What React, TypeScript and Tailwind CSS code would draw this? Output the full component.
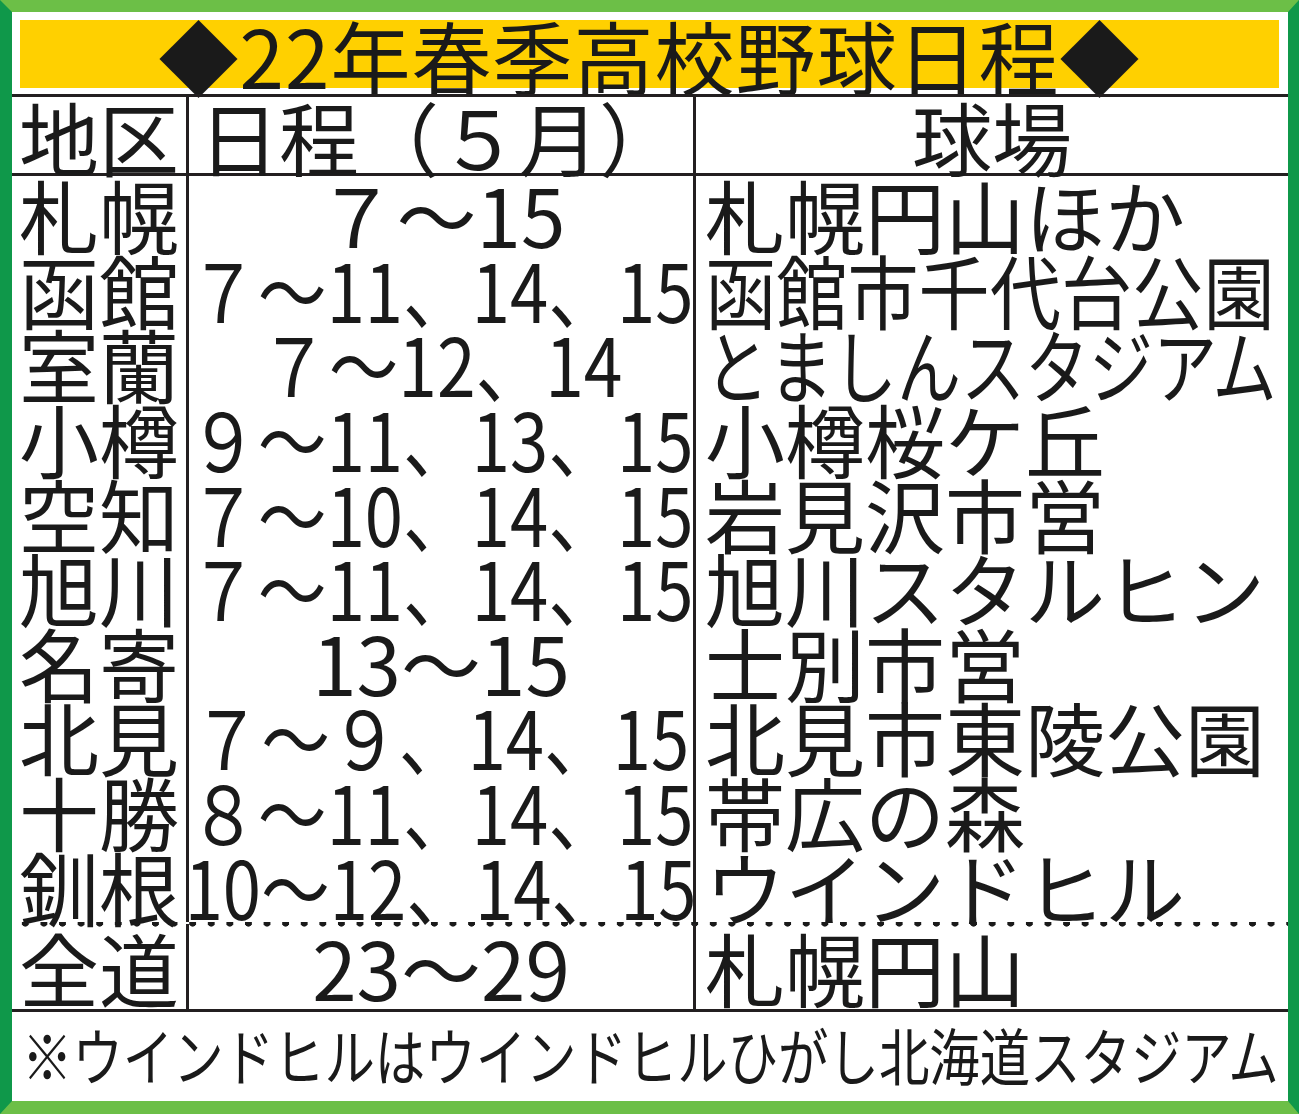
// [地区, 日程, 球場, 日程の圧縮, 球場の圧縮]
const rows: [string, string, string, string, string][] = [
  ["札幌", "７～15", "札幌円山ほか", "", ""],
  ["函館", "７～11、14、15", "函館市千代台公園", "scale-x-[0.86]", "scale-x-[0.89]"],
  ["室蘭", "７～12、14", "とましんスタジアム", "scale-x-[0.87]", "scale-x-[0.8]"],
  ["小樽", "９～11、13、15", "小樽桜ケ丘", "scale-x-[0.86]", ""],
  ["空知", "７～10、14、15", "岩見沢市営", "scale-x-[0.86]", ""],
  ["旭川", "７～11、14、15", "旭川スタルヒン", "scale-x-[0.86]", ""],
  ["名寄", "13～15", "士別市営", "", ""],
  ["北見", "７～９、14、15", "北見市東陵公園", "scale-x-[0.86]", ""],
  ["十勝", "８～11、14、15", "帯広の森", "scale-x-[0.86]", ""],
  ["釧根", "10～12、14、15", "ウインドヒル", "scale-x-[0.86]", ""],
];

function Row({
  area,
  dates,
  park,
  dateFit = "",
  parkFit = "",
  tall,
}: {
  area: string;
  dates: string;
  park: string;
  dateFit?: string;
  parkFit?: string;
  tall?: boolean;
}) {
  return (
    <div className={`flex ${tall ? "h-[87px] pt-[2px]" : "h-[74.6px]"} leading-[74px]`}>
      <div className="w-[177px] shrink-0 border-r-[3px] border-[#231f20] flex items-center justify-center text-[80px]">
        {area}
      </div>
      <div className="w-[507px] shrink-0 border-r-[3px] border-[#231f20] flex items-center justify-center text-[80px] whitespace-nowrap">
        <span className={`inline-block origin-center ${dateFit}`}>{dates}</span>
      </div>
      <div className="flex-1 min-w-0 flex items-center pl-[9px] text-[80px] whitespace-nowrap">
        <span className={`inline-block origin-left ${parkFit}`}>{park}</span>
      </div>
    </div>
  );
}

export default function App() {
  return (
    <div className="w-[1299px] h-[1114px] bg-white border-t-[12px] border-b-[13px] border-l-[12px] border-r-[11px] border-t-[#6cbf47] border-b-[#6cbf47] border-l-[#0f984a] border-r-[#0f984a] text-[#1a1a1a] font-['Noto_Sans_CJK_JP',sans-serif] font-normal flex flex-col overflow-hidden">
      <div className="pt-[8px] pl-[8px] pr-[9px]">
        <div className="h-[68px] bg-[#ffd000] flex items-center justify-center text-[80px] leading-[68px] tracking-[1px] whitespace-nowrap">
          ◆22年春季高校野球日程◆
        </div>
      </div>

      <div className="mt-[6px] border-t-[3px] border-[#231f20] flex flex-col">
        {/* header */}
        <div className="flex h-[79px] border-b-[3px] border-[#231f20] leading-[76px]">
          <div className="w-[177px] shrink-0 border-r-[3px] border-[#231f20] flex items-center justify-center text-[80px]">
            地区
          </div>
          <div className="w-[507px] shrink-0 border-r-[3px] border-[#231f20] flex items-center pl-[10px] text-[80px] whitespace-nowrap">
            日程（５月）
          </div>
          <div className="flex-1 flex items-center justify-center text-[80px]">球場</div>
        </div>

        {rows.map(([a, d, p, df, pf]) => (
          <Row key={a} area={a} dates={d} park={p} dateFit={df} parkFit={pf} />
        ))}

        <div className="bg-[radial-gradient(circle,#1a1a1a_3.3px,transparent_3.9px)] bg-[length:18.6px_8px] bg-repeat-x bg-[position:4px_-3px]">
          <Row area="全道" dates="23～29" park="札幌円山" tall />
        </div>

        <div className="border-t-[3px] border-[#231f20] h-[87px] flex items-center pl-[10px] text-[62px] leading-[80px] whitespace-nowrap">
          <span className="inline-block origin-left scale-x-[0.813]">
            ※ウインドヒルはウインドヒルひがし北海道スタジアム
          </span>
        </div>
      </div>
    </div>
  );
}
